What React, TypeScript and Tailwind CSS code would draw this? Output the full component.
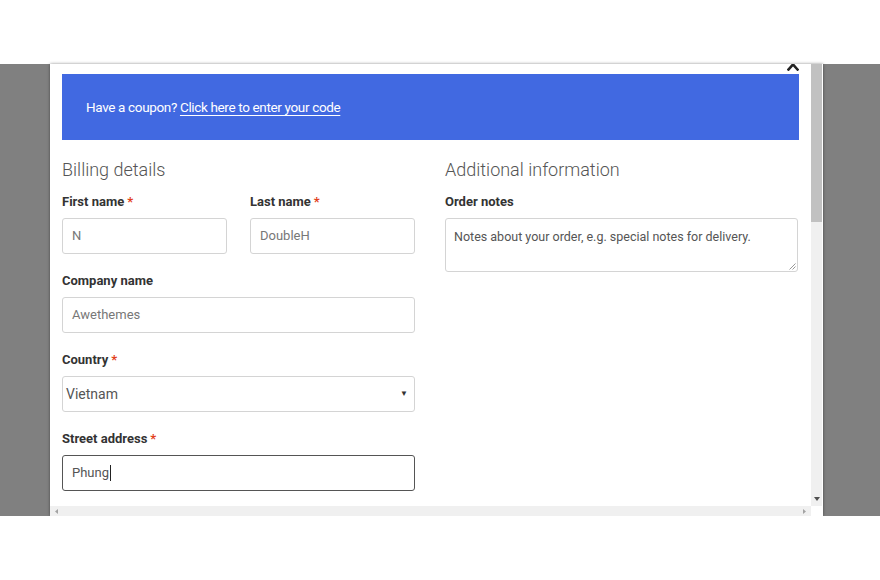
const font = { fontFamily: "Roboto, 'Liberation Sans', sans-serif" };

function Label({ text, required }: { text: string; required?: boolean }) {
  return (
    <div className="mb-[6px] h-[20px] text-[13px] font-bold leading-[20px] text-[#333]">
      {text}
      {required && <span className="ml-[3px] text-[#e2401c]">*</span>}
    </div>
  );
}

function Field({
  value,
  dark,
  focused,
  caret,
}: {
  value: string;
  dark?: boolean;
  focused?: boolean;
  caret?: boolean;
}) {
  return (
    <div
      className={[
        "flex h-[36px] items-center rounded-[3px] border px-[9px] text-[13px]",
        focused ? "border-[#555]" : "border-[#d4d4d4]",
        dark ? "text-[#555]" : "text-[#777]",
      ].join(" ")}
    >
      {value}
      {caret && <span className="ml-[1px] h-[16px] w-px bg-[#222]" />}
    </div>
  );
}

export default function App() {
  return (
    <div className="flex h-[580px] w-[880px] flex-col bg-white" style={font}>
      <div className="h-[64px] shrink-0 bg-white" />

      <div className="flex h-[452px] shrink-0 bg-[#808080]">
        <div className="w-[50px] shrink-0" />

        <div className="flex w-[773px] shrink-0 flex-col bg-white shadow-[0_0_3px_rgba(0,0,0,0.45)]">
          <div className="flex min-h-0 flex-1">
            {/* scrolled content */}
            <div className="relative flex-1 overflow-hidden px-[12px] pt-[10px]">
              <svg
                className="absolute left-[737px] top-[-6px]"
                width="12"
                height="13"
                viewBox="0 0 12 13"
              >
                <path
                  d="M1.5 1.5 L10.5 11.5 M10.5 1.5 L1.5 11.5"
                  stroke="#222"
                  strokeWidth="2.6"
                  strokeLinecap="square"
                />
              </svg>

              <div className="flex h-[66px] items-center bg-[#4169e1] pl-[24px] text-[13.5px] tracking-[-0.35px] text-white">
                Have a coupon?&nbsp;
                <span className="underline decoration-1 underline-offset-[3px]">
                  Click here to enter your code
                </span>
              </div>

              <div className="mt-[18px] flex gap-[30px]">
                <div className="w-[353px] shrink-0">
                  <h3 className="mb-[10px] h-[24px] text-[18px] font-light leading-[24px] text-[#555]">
                    Billing details
                  </h3>

                  <div className="flex gap-[23px]">
                    <div className="w-[165px]">
                      <Label text="First name" required />
                      <Field value="N" />
                    </div>
                    <div className="w-[165px]">
                      <Label text="Last name" required />
                      <Field value="DoubleH" />
                    </div>
                  </div>

                  <div className="mt-[17px]">
                    <Label text="Company name" />
                    <Field value="Awethemes" />
                  </div>

                  <div className="mt-[17px]">
                    <Label text="Country" required />
                    <div className="flex h-[36px] items-center justify-between rounded-[3px] border border-[#d4d4d4] pl-[3px] pr-[6px] text-[14px] text-[#555]">
                      Vietnam
                      <span className="text-[8px] text-[#333]">▼</span>
                    </div>
                  </div>

                  <div className="mt-[17px]">
                    <Label text="Street address" required />
                    <Field value="Phung" dark focused caret />
                  </div>
                </div>

                <div className="w-[353px] shrink-0">
                  <h3 className="mb-[10px] h-[24px] text-[18px] font-light leading-[24px] text-[#555]">
                    Additional information
                  </h3>
                  <Label text="Order notes" />
                  <div className="relative h-[54px] rounded-[3px] border border-[#d4d4d4] px-[8px] pt-[9px] text-[12.5px] text-[#555]">
                    Notes about your order, e.g. special notes for delivery.
                    <svg
                      className="absolute bottom-[1px] right-[1px]"
                      width="7"
                      height="7"
                      viewBox="0 0 7 7"
                    >
                      <path d="M6.5 0.5 L0.5 6.5 M6.5 3.5 L3.5 6.5" stroke="#999" strokeWidth="1" />
                    </svg>
                  </div>
                </div>
              </div>
            </div>

            {/* vertical scrollbar */}
            <div className="flex w-[12px] shrink-0 flex-col border-r border-white bg-[#f0f0f0]">
              <div className="h-[158px] bg-[#c1c1c1]" />
              <div className="flex-1" />
              <div className="flex h-[14px] items-center justify-center">
                <svg width="6" height="4" viewBox="0 0 6 4">
                  <path d="M0 0 H6 L3 4 Z" fill="#505050" />
                </svg>
              </div>
            </div>
          </div>

          {/* horizontal scrollbar */}
          <div className="flex h-[10px] shrink-0">
            <div className="flex flex-1 items-center justify-between bg-[#f0f0f0] px-[5px]">
              <svg width="3" height="5" viewBox="0 0 3 5">
                <path d="M3 0 V5 L0 2.5 Z" fill="#a3a3a3" />
              </svg>
              <svg width="3" height="5" viewBox="0 0 3 5">
                <path d="M0 0 V5 L3 2.5 Z" fill="#a3a3a3" />
              </svg>
            </div>
            <div className="w-[12px] bg-white" />
          </div>
        </div>

        <div className="flex-1" />
      </div>

      <div className="flex-1 bg-white" />
    </div>
  );
}
